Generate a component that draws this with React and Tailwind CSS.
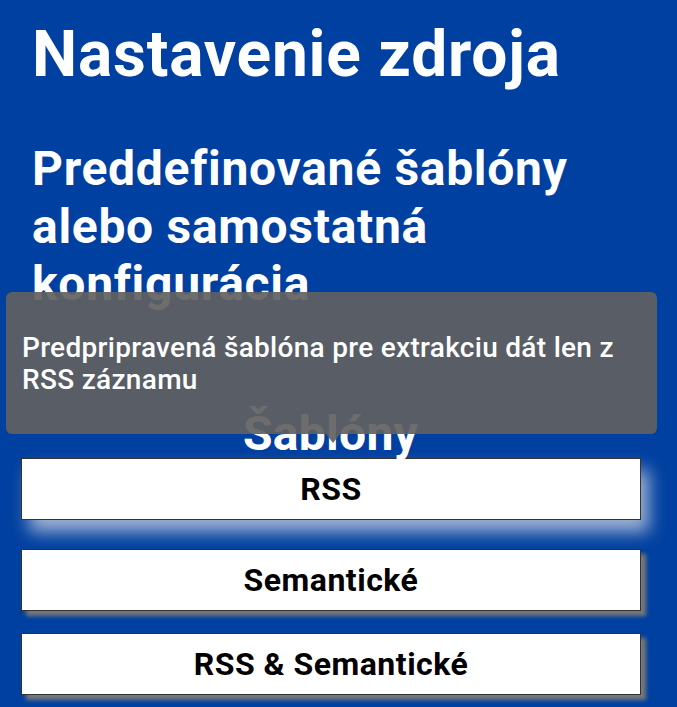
import React from 'react';

const templates = [
    { label: 'RSS', shadow: 'shadow-[8px_12px_16px_rgba(210,215,225,0.75)]', gap: 'mb-[29px]' },
    { label: 'Semantické', shadow: 'shadow-[5px_5px_4px_rgba(120,120,120,1)]', gap: 'mb-[22px]' },
    { label: 'RSS & Semantické', shadow: 'shadow-[5px_5px_4px_rgba(120,120,120,1)]', gap: '' },
];

export default function App() {
    return (
        <div className="relative h-[707px] w-[677px] overflow-hidden bg-[#0040a0] text-white font-['Roboto',sans-serif]">
            <div className="w-[661px]">
                <div className="px-8 pt-[16px]">
                    <h1 className="text-[64px] font-bold leading-[77px] tracking-[0.8px]">Nastavenie zdroja</h1>
                    <h2 className="mt-[47px] text-[48px] font-bold leading-[57.6px] tracking-[0.7px]">
                        Preddefinované šablóny alebo samostatná konfigurácia
                    </h2>
                </div>

                <h3 className="mt-[97px] text-center text-[48px] font-bold leading-[48px] tracking-[0.3px]">Šablóny</h3>

                {/* Template buttons */}
                <div className="ml-[21px] w-[620px]">
                    {templates.map(t => (
                        <button
                            key={t.label}
                            className={`block h-[62px] w-full border border-[#333] bg-white text-[32px] font-bold tracking-[0.5px] text-black ${t.shadow} ${t.gap}`}
                        >
                            {t.label}
                        </button>
                    ))}
                </div>
            </div>

            {/* Tooltip over the RSS button */}
            <div className="absolute left-[6px] top-[292px] h-[142px] w-[651px] rounded-md bg-[rgba(97,97,97,0.92)] px-4 pt-[40px] text-[28px] font-medium leading-[32px] tracking-[0.3px] text-white">
                Predpripravená šablóna pre extrakciu dát len z RSS záznamu
                <div className="absolute left-[320px] top-full h-0 w-0 border-x-[7px] border-t-[9px] border-x-transparent border-t-[rgba(97,97,97,0.92)]"></div>
            </div>
        </div>
    );
}
